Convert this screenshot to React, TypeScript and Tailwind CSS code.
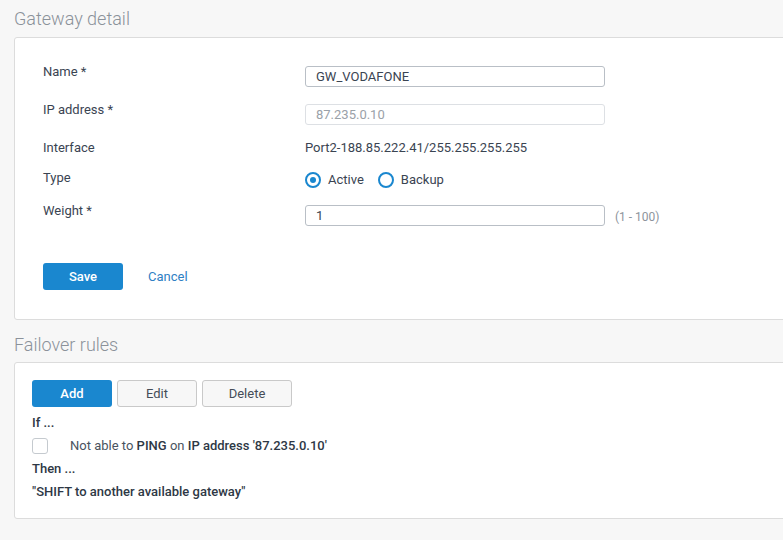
import React from 'react'

const font = { fontFamily: 'Roboto, "Liberation Sans", sans-serif' }

const Radio = ({ checked, label }: { checked?: boolean; label: string }) => (
  <label className="flex items-center gap-[7px]">
    <span className="flex h-[16px] w-[16px] items-center justify-center rounded-full border-2 border-[#1a87cf] bg-white">
      {checked && <span className="h-[6px] w-[6px] rounded-full bg-[#1a87cf]" />}
    </span>
    <span>{label}</span>
  </label>
)

const Row = ({
  label,
  className,
  children,
}: {
  label: string
  className?: string
  children: React.ReactNode
}) => (
  <div className={`flex items-start ${className ?? ''}`}>
    <div className="w-[262px] shrink-0 leading-[16px]">{label}</div>
    <div className="flex items-start">{children}</div>
  </div>
)

export default function App() {
  return (
    <div
      className="h-[540px] w-full overflow-hidden bg-[#f7f7f7] pl-[14px] text-[13px] text-[#3a4452]"
      style={font}
    >
      <div className="flex h-[37px] items-center text-[18px] font-light text-[#8b929a]">
        Gateway detail
      </div>
      <div className="-mr-4 rounded-[3px] border border-[#dcdcdc] bg-white pt-[26px] pb-[29px] pl-[28px]">
        <Row label="Name *">
          <input
            className="mt-[2px] h-[21px] w-[300px] rounded-[3px] border border-[#b9bfc6] px-[10px] text-[13px] text-[#3a4452] outline-none"
            defaultValue="GW_VODAFONE"
          />
        </Row>
        <Row label="IP address *" className="mt-[15px]">
          <input
            disabled
            className="mt-[2px] h-[21px] w-[300px] rounded-[3px] border border-[#dde0e4] bg-white px-[10px] text-[13px] text-[#9aa1a8] outline-none"
            defaultValue="87.235.0.10"
          />
        </Row>
        <Row label="Interface" className="mt-[15px]">
          <span className="leading-[16px]">Port2-188.85.222.41/255.255.255.255</span>
        </Row>
        <Row label="Type" className="mt-[14px]">
          <div className="mt-[2px] flex items-center gap-[14px] leading-[16px]">
            <Radio checked label="Active" />
            <Radio label="Backup" />
          </div>
        </Row>
        <Row label="Weight *" className="mt-[15px]">
          <input
            className="mt-[2px] h-[21px] w-[300px] rounded-[3px] border border-[#b9bfc6] px-[10px] text-[13px] text-[#3a4452] outline-none"
            defaultValue="1"
          />
          <span className="mt-[5px] ml-[10px] text-[12px] text-[#8d949c]">(1 - 100)</span>
        </Row>
        <div className="mt-[37px] flex items-center">
          <button className="h-[27px] w-[80px] rounded-[3px] bg-[#1a87cf] text-[13px] font-medium text-white">
            Save
          </button>
          <a className="ml-[25px] text-[#2f80c4]">Cancel</a>
        </div>
      </div>
      <div className="flex h-[42px] items-center pt-[6px] text-[18px] font-light text-[#8b929a]">
        Failover rules
      </div>
      <div className="-mr-4 rounded-[3px] border border-[#dcdcdc] bg-white pt-[17px] pb-[18px] pl-[17px]">
        <div className="flex gap-[5px]">
          <button className="h-[27px] w-[80px] rounded-[3px] bg-[#1a87cf] text-[13px] font-medium text-white">
            Add
          </button>
          <button className="h-[27px] w-[80px] rounded-[3px] border border-[#c9c9c9] bg-[#f7f7f7] text-[13px] text-[#454d57]">
            Edit
          </button>
          <button className="h-[27px] w-[90px] rounded-[3px] border border-[#c9c9c9] bg-[#f7f7f7] text-[13px] text-[#454d57]">
            Delete
          </button>
        </div>
        <div className="mt-[8px] leading-[16px] font-medium text-[#2e3845]">If ...</div>
        <div className="mt-[7px] flex items-center leading-[16px]">
          <span className="h-[16px] w-[16px] rounded-[3px] border border-[#c5cacf] bg-white" />
          <span className="ml-[22px] text-[#4a5360]">
            Not able to <span className="font-medium text-[#2e3845]">PING</span> on{' '}
            <span className="font-medium text-[#2e3845]">IP address '87.235.0.10'</span>
          </span>
        </div>
        <div className="mt-[7px] leading-[16px] font-medium text-[#2e3845]">Then ...</div>
        <div className="mt-[7px] leading-[16px] font-medium text-[#2e3845]">
          "SHIFT to another available gateway"
        </div>
      </div>
    </div>
  )
}
